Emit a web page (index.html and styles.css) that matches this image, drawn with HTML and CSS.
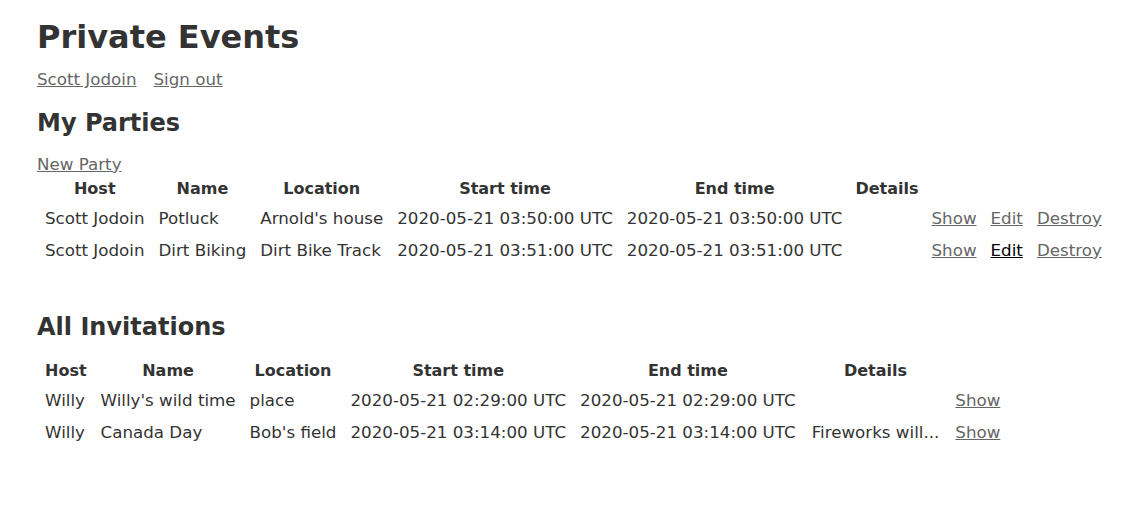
FILE: index.html
```html
<!DOCTYPE html>
<html lang="en">
<head>
<meta charset="utf-8">
<title>Private Events</title>
<link rel="stylesheet" href="styles.css">
</head>
<body>
<div class="page">
  <h1 class="title">Private Events</h1>
  <nav class="user-links">
    <a href="#">Scott Jodoin</a>
    <a href="#">Sign out</a>
  </nav>

  <h2 class="section-title">My Parties</h2>
  <a class="new-link" href="#">New Party</a>
  <table class="events">
    <thead>
      <tr>
        <th>Host</th>
        <th>Name</th>
        <th>Location</th>
        <th>Start time</th>
        <th>End time</th>
        <th class="details-head">Details</th>
        <th colspan="3"></th>
      </tr>
    </thead>
    <tbody>
      <tr>
        <td>Scott Jodoin</td>
        <td>Potluck</td>
        <td>Arnold's house</td>
        <td>2020-05-21 03:50:00 UTC</td>
        <td>2020-05-21 03:50:00 UTC</td>
        <td></td>
        <td><a href="#">Show</a></td>
        <td><a href="#">Edit</a></td>
        <td><a href="#">Destroy</a></td>
      </tr>
      <tr>
        <td>Scott Jodoin</td>
        <td>Dirt Biking</td>
        <td>Dirt Bike Track</td>
        <td>2020-05-21 03:51:00 UTC</td>
        <td>2020-05-21 03:51:00 UTC</td>
        <td></td>
        <td><a href="#">Show</a></td>
        <td><a class="active" href="#">Edit</a></td>
        <td><a href="#">Destroy</a></td>
      </tr>
    </tbody>
  </table>

  <h2 class="section-title invitations-title">All Invitations</h2>
  <table class="events">
    <thead>
      <tr>
        <th>Host</th>
        <th>Name</th>
        <th>Location</th>
        <th>Start time</th>
        <th>End time</th>
        <th>Details</th>
        <th></th>
      </tr>
    </thead>
    <tbody>
      <tr>
        <td>Willy</td>
        <td>Willy's wild time</td>
        <td>place</td>
        <td>2020-05-21 02:29:00 UTC</td>
        <td>2020-05-21 02:29:00 UTC</td>
        <td></td>
        <td><a href="#">Show</a></td>
      </tr>
      <tr>
        <td>Willy</td>
        <td>Canada Day</td>
        <td>Bob's field</td>
        <td>2020-05-21 03:14:00 UTC</td>
        <td>2020-05-21 03:14:00 UTC</td>
        <td class="details-cell">Fireworks will...</td>
        <td><a href="#">Show</a></td>
      </tr>
    </tbody>
  </table>
</div>
</body>
</html>
```

FILE: styles.css
```css
html, body {
  margin: 0;
  padding: 0;
  background: #ffffff;
}

body {
  font-family: "DejaVu Sans", Verdana, sans-serif;
  font-size: 16.7px;
  color: #333333;
}

.page {
  padding: 19px 37px 40px;
}

a {
  color: #666666;
  text-decoration: underline;
}

a.active {
  color: #000000;
}

.title {
  font-size: 32px;
  font-weight: bold;
  line-height: 37px;
  margin: 0;
}

.user-links {
  display: flex;
  gap: 17px;
  margin-top: 14px;
  line-height: 19.5px;
}

.section-title {
  font-size: 24px;
  font-weight: bold;
  line-height: 28px;
  margin: 19px 0 0;
}

.new-link {
  display: inline-block;
  margin-top: 18px;
  line-height: 19.5px;
}

.events {
  border-collapse: separate;
  border-spacing: 2px;
  line-height: 18px;
}

.events th {
  font-size: 16px;
  font-weight: bold;
  text-align: center;
  padding: 4px 6px 3px;
}

.events th.details-head {
  padding: 4px 5px 3px;
}

.events td {
  padding: 6px 6px;
  text-align: left;
  white-space: nowrap;
}

.events td.details-cell {
  padding-left: 8px;
  padding-right: 8px;
}

.invitations-title {
  margin-top: 46px;
  margin-bottom: 15px;
}
```
